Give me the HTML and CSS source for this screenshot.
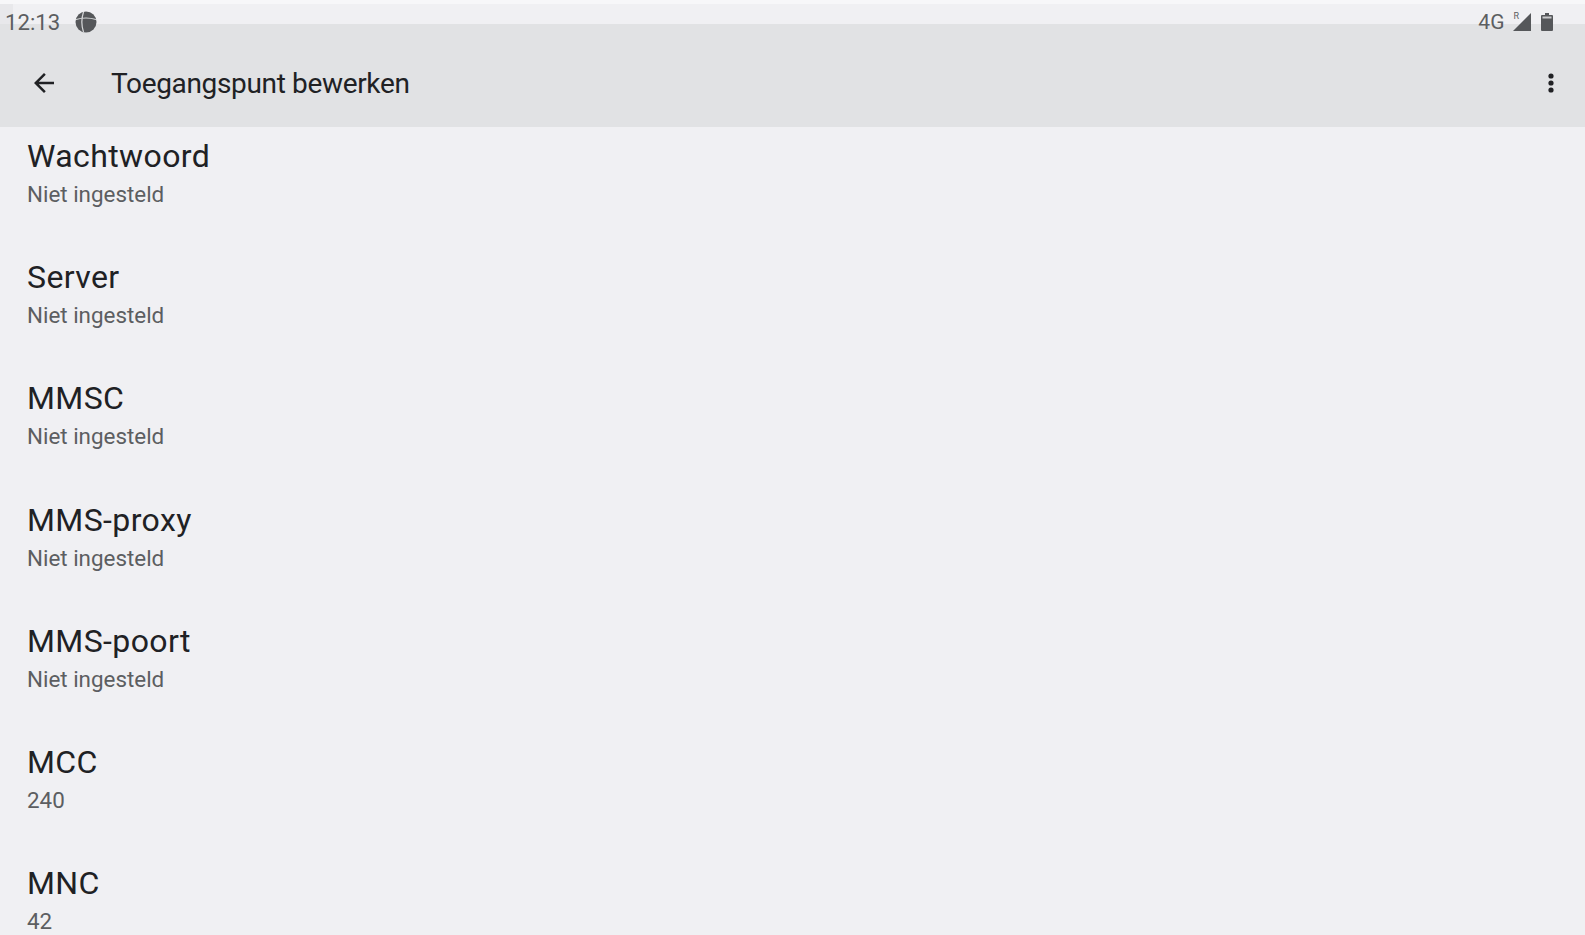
FILE: index.html
```html
<!DOCTYPE html>
<html lang="nl">
<head>
<meta charset="UTF-8" />
<meta name="viewport" content="width=device-width, initial-scale=1" />
<title>Toegangspunt bewerken</title>
<link rel="stylesheet" href="styles.css">
</head>
<body>

<div class="status-bar">
  <div class="status-left">
    <span class="clock">12:13</span>
    <svg class="globe" width="22" height="22" viewBox="0 0 22 22" aria-hidden="true">
      <circle cx="11" cy="11" r="10.5" fill="#55575a"/>
      <path d="M1 8.5c6-1.8 14-1.8 20 0M8.5 1c-2 6-2 14 0 20" fill="none" stroke="#d8d9db" stroke-width="1.2"/>
    </svg>
  </div>
  <div class="status-right">
    <span class="net">4G</span>
    <span class="roam">R</span>
    <svg width="18" height="18" viewBox="0 0 18 18" aria-hidden="true"><path d="M18 0v18H0z" fill="#55575a"/></svg>
    <svg class="battery" width="12" height="18" viewBox="0 0 12 18" aria-hidden="true">
      <path d="M4 0h4v2h3a1 1 0 0 1 1 1v14a1 1 0 0 1-1 1H1a1 1 0 0 1-1-1V3a1 1 0 0 1 1-1h3z" fill="#55575a"/>
      <rect x="1.5" y="3.5" width="9" height="2" fill="#c9cacc"/>
    </svg>
  </div>
</div>

<header>
  <button class="icon-btn back" aria-label="Terug">
    <svg width="24" height="24" viewBox="0 0 24 24"><path d="M20 11H7.83l5.59-5.59L12 4l-8 8 8 8 1.41-1.41L7.83 13H20z" fill="#202124"/></svg>
  </button>
  <div class="page-title">Toegangspunt bewerken</div>
  <button class="icon-btn more" aria-label="Meer opties">
    <svg width="24" height="24" viewBox="0 0 24 24"><circle cx="12" cy="5" r="2.6" fill="#202124"/><circle cx="12" cy="12" r="2.6" fill="#202124"/><circle cx="12" cy="19" r="2.6" fill="#202124"/></svg>
  </button>
</header>

<main>
  <div class="pref"><div class="pref-title">Wachtwoord</div><div class="pref-value">Niet ingesteld</div></div>
  <div class="pref"><div class="pref-title">Server</div><div class="pref-value">Niet ingesteld</div></div>
  <div class="pref"><div class="pref-title">MMSC</div><div class="pref-value">Niet ingesteld</div></div>
  <div class="pref"><div class="pref-title">MMS-proxy</div><div class="pref-value">Niet ingesteld</div></div>
  <div class="pref"><div class="pref-title">MMS-poort</div><div class="pref-value">Niet ingesteld</div></div>
  <div class="pref"><div class="pref-title">MCC</div><div class="pref-value">240</div></div>
  <div class="pref"><div class="pref-title">MNC</div><div class="pref-value">42</div></div>
</main>

</body>
</html>
```

FILE: styles.css
```css
html, body { height: 100%; }
body { margin: 0; height: 935px; overflow: hidden; background: #f0f0f3; color: #202124; font-family: Roboto, "Noto Sans", sans-serif; border-top: 4px solid #f7f7f9; box-sizing: border-box; }
.status-bar { height: 36px; margin-bottom: -16px; padding: 0 32px 0 5px; display: flex; justify-content: space-between; align-items: center; color: #5c5e61; position: relative; z-index: 1; }
.status-bar::before { content: ""; position: absolute; left: 0; top: 0; width: 13px; height: 20px; background: #e8e8eb; z-index: -1; }
.status-left { display: flex; align-items: center; gap: 15px; }
.clock { font-size: 22.2px; line-height: 36px; }
.status-right { display: flex; align-items: center; gap: 3px; }
.net { font-size: 21px; margin-right: 6px; }
.roam { font-size: 9px; align-self: flex-start; margin-right: -9px; margin-top: 1px; }
.battery { margin-left: 7px; }
header { height: 103px; background: #e1e2e4; display: flex; align-items: center; padding-top: 15px; box-sizing: border-box; }
.icon-btn { background: none; border: none; padding: 0; width: 24px; height: 24px; cursor: pointer; }
.back { margin-left: 32px; transform: scale(1.25); }
.page-title { font-size: 28px; margin-left: 55px; flex: 1; letter-spacing: -0.34px; }
.more { margin-right: 22px; }
.pref { height: 121.2px; padding-left: 27px; box-sizing: border-box; }
.pref-title { font-size: 32px; line-height: 40px; padding-top: 9px; letter-spacing: 0.4px; }
.pref-value { font-size: 22.4px; line-height: 30px; color: #5c5e61; margin-top: 3px; }
```
